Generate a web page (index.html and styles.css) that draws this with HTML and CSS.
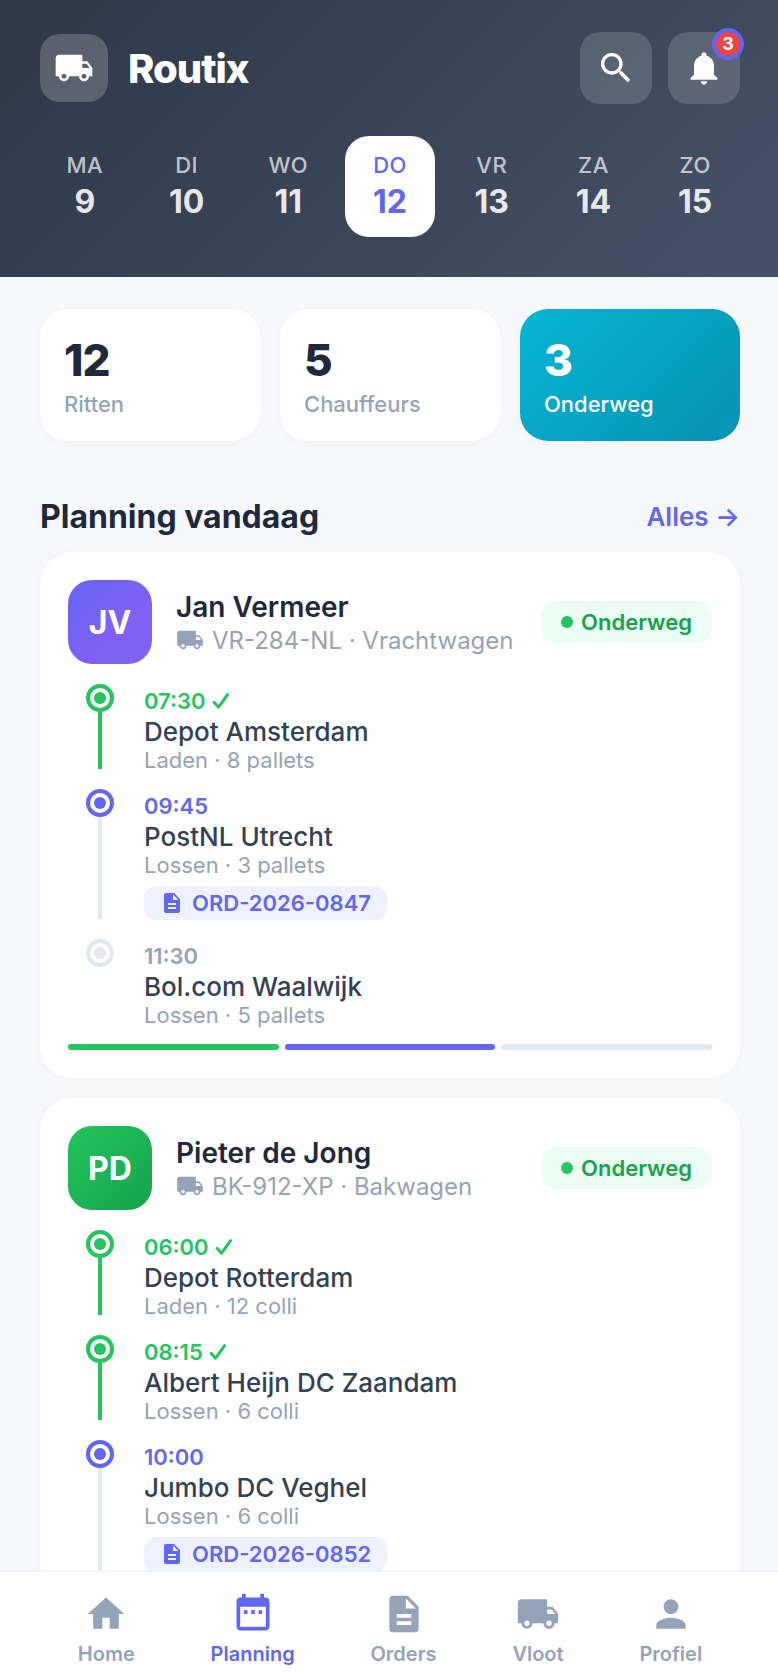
FILE: index.html
```html
<!DOCTYPE html>
<html lang="nl">
<head>
  <meta charset="UTF-8">
  <meta name="viewport" content="width=device-width, initial-scale=1.0">
  <title>Routix</title>
  <link rel="stylesheet" href="styles.css">
</head>
<body>
  <!-- Iconen -->
  <svg class="sprite" width="0" height="0">
    <symbol id="i-truck" viewBox="0 0 24 24"><path d="M20 8h-3V4H3c-1.1 0-2 .9-2 2v11h2c0 1.66 1.34 3 3 3s3-1.34 3-3h6c0 1.66 1.34 3 3 3s3-1.34 3-3h2v-5l-3-4zM6 18.5c-.83 0-1.5-.67-1.5-1.5s.67-1.5 1.5-1.5 1.5.67 1.5 1.5-.67 1.5-1.5 1.5zm13.5-9l1.96 2.5H17V9.5h2.5zm-1.5 9c-.83 0-1.5-.67-1.5-1.5s.67-1.5 1.5-1.5 1.5.67 1.5 1.5-.67 1.5-1.5 1.5z"/></symbol>
    <symbol id="i-search" viewBox="0 0 24 24"><path d="M15.5 14h-.79l-.28-.27C15.41 12.59 16 11.11 16 9.5 16 5.91 13.09 3 9.5 3S3 5.91 3 9.5 5.91 16 9.5 16c1.61 0 3.09-.59 4.23-1.57l.27.28v.79l5 4.99L20.49 19l-4.99-5zm-6 0C7.01 14 5 11.99 5 9.5S7.01 5 9.5 5 14 7.01 14 9.5 11.99 14 9.5 14z"/></symbol>
    <symbol id="i-bell" viewBox="0 0 24 24"><path d="M12 22c1.1 0 2-.9 2-2h-4c0 1.1.89 2 2 2zm6-6v-5c0-3.07-1.64-5.64-4.5-6.32V4c0-.83-.67-1.5-1.5-1.5s-1.5.67-1.5 1.5v.68C7.63 5.36 6 7.92 6 11v5l-2 2v1h16v-1l-2-2z"/></symbol>
    <symbol id="i-doc" viewBox="0 0 24 24"><path d="M14 2H6c-1.1 0-1.99.9-1.99 2L4 20c0 1.1.89 2 1.99 2H18c1.1 0 2-.9 2-2V8l-6-6zm2 16H8v-2h8v2zm0-4H8v-2h8v2zm-3-5V3.5L18.5 9H13z"/></symbol>
    <symbol id="i-home" viewBox="0 0 24 24"><path d="M10 20v-6h4v6h5v-8h3L12 3 2 12h3v8z"/></symbol>
    <symbol id="i-calendar" viewBox="0 0 24 24"><path d="M19 3h-1V1h-2v2H8V1H6v2H5c-1.11 0-2 .9-2 2v14c0 1.1.89 2 2 2h14c1.1 0 2-.9 2-2V5c0-1.1-.9-2-2-2zm0 16H5V8h14v11zM9 10H7v2h2v-2zm4 0h-2v2h2v-2zm4 0h-2v2h2v-2z"/></symbol>
    <symbol id="i-person" viewBox="0 0 24 24"><path d="M12 12c2.21 0 4-1.79 4-4s-1.79-4-4-4-4 1.79-4 4 1.79 4 4 4zm0 2c-2.67 0-8 1.34-8 4v2h16v-2c0-2.66-5.33-4-8-4z"/></symbol>
    <symbol id="i-check" viewBox="0 0 18 18"><path d="M2.2 10.4L6.6 15.2L15.6 2.6" fill="none" stroke="currentColor" stroke-width="3" stroke-linecap="round" stroke-linejoin="round"/></symbol>
  </svg>

  <div class="app">
    <header class="header">
      <div class="topbar">
        <div class="logo"><svg class="icon"><use href="#i-truck"/></svg></div>
        <h1>Routix</h1>
        <button class="icon-btn" aria-label="Zoeken"><svg class="icon"><use href="#i-search"/></svg></button>
        <button class="icon-btn" aria-label="Meldingen"><svg class="icon"><use href="#i-bell"/></svg><span class="badge">3</span></button>
      </div>
      <div class="week">
        <div class="day"><span class="day-name">MA</span><span class="day-num">9</span></div>
        <div class="day"><span class="day-name">DI</span><span class="day-num">10</span></div>
        <div class="day"><span class="day-name">WO</span><span class="day-num">11</span></div>
        <div class="day active"><span class="day-name">DO</span><span class="day-num">12</span></div>
        <div class="day"><span class="day-name">VR</span><span class="day-num">13</span></div>
        <div class="day"><span class="day-name">ZA</span><span class="day-num">14</span></div>
        <div class="day"><span class="day-name">ZO</span><span class="day-num">15</span></div>
      </div>
    </header>

    <main class="content">
      <!-- Statistieken -->
      <div class="stats">
        <div class="stat"><div class="stat-value">12</div><div class="stat-label">Ritten</div></div>
        <div class="stat"><div class="stat-value">5</div><div class="stat-label">Chauffeurs</div></div>
        <div class="stat highlight"><div class="stat-value">3</div><div class="stat-label">Onderweg</div></div>
      </div>

      <div class="section-head">
        <h2>Planning vandaag</h2>
        <a class="more">Alles →</a>
      </div>

      <!-- Rit 1 -->
      <section class="card">
        <div class="driver">
          <div class="avatar purple">JV</div>
          <div class="driver-info">
            <div class="driver-name">Jan Vermeer</div>
            <div class="vehicle"><svg class="icon"><use href="#i-truck"/></svg>VR-284-NL · Vrachtwagen</div>
          </div>
          <div class="status">Onderweg</div>
        </div>
        <div class="stop done">
          <div class="track"><div class="dot"></div><div class="line"></div></div>
          <div class="stop-body">
            <div class="time">07:30<svg class="icon"><use href="#i-check"/></svg></div>
            <div class="place">Depot Amsterdam</div>
            <div class="detail">Laden · 8 pallets</div>
          </div>
        </div>
        <div class="stop current">
          <div class="track"><div class="dot"></div><div class="line"></div></div>
          <div class="stop-body">
            <div class="time">09:45</div>
            <div class="place">PostNL Utrecht</div>
            <div class="detail">Lossen · 3 pallets</div>
            <div class="order"><svg class="icon"><use href="#i-doc"/></svg>ORD-2026-0847</div>
          </div>
        </div>
        <div class="stop">
          <div class="track"><div class="dot"></div></div>
          <div class="stop-body">
            <div class="time">11:30</div>
            <div class="place">Bol.com Waalwijk</div>
            <div class="detail">Lossen · 5 pallets</div>
          </div>
        </div>
        <div class="progress">
          <span class="bar done"></span>
          <span class="bar current"></span>
          <span class="bar"></span>
        </div>
      </section>

      <!-- Rit 2 -->
      <section class="card">
        <div class="driver">
          <div class="avatar green">PD</div>
          <div class="driver-info">
            <div class="driver-name">Pieter de Jong</div>
            <div class="vehicle"><svg class="icon"><use href="#i-truck"/></svg>BK-912-XP · Bakwagen</div>
          </div>
          <div class="status">Onderweg</div>
        </div>
        <div class="stop done">
          <div class="track"><div class="dot"></div><div class="line"></div></div>
          <div class="stop-body">
            <div class="time">06:00<svg class="icon"><use href="#i-check"/></svg></div>
            <div class="place">Depot Rotterdam</div>
            <div class="detail">Laden · 12 colli</div>
          </div>
        </div>
        <div class="stop done">
          <div class="track"><div class="dot"></div><div class="line"></div></div>
          <div class="stop-body">
            <div class="time">08:15<svg class="icon"><use href="#i-check"/></svg></div>
            <div class="place">Albert Heijn DC Zaandam</div>
            <div class="detail">Lossen · 6 colli</div>
          </div>
        </div>
        <div class="stop current">
          <div class="track"><div class="dot"></div><div class="line"></div></div>
          <div class="stop-body">
            <div class="time">10:00</div>
            <div class="place">Jumbo DC Veghel</div>
            <div class="detail">Lossen · 6 colli</div>
            <div class="order"><svg class="icon"><use href="#i-doc"/></svg>ORD-2026-0852</div>
          </div>
        </div>
      </section>
    </main>

    <nav class="nav">
      <a class="nav-item"><svg class="icon"><use href="#i-home"/></svg>Home</a>
      <a class="nav-item active"><svg class="icon"><use href="#i-calendar"/></svg>Planning</a>
      <a class="nav-item"><svg class="icon"><use href="#i-doc"/></svg>Orders</a>
      <a class="nav-item"><svg class="icon"><use href="#i-truck"/></svg>Vloot</a>
      <a class="nav-item"><svg class="icon"><use href="#i-person"/></svg>Profiel</a>
    </nav>
  </div>
</body>
</html>
```

FILE: styles.css
```css
* {
  box-sizing: border-box;
  margin: 0;
  padding: 0;
}
body {
  font-family: 'Inter', sans-serif;
  background: #f7f8fc;
  color: #1e293b;
}
.sprite {
  display: none;
}
.icon {
  display: block;
  flex-shrink: 0;
  width: 40px;
  height: 40px;
  fill: currentColor;
}
.app {
  display: flex;
  flex-direction: column;
  height: 100vh;
  overflow: hidden;
}

/* Header */
.header {
  flex-shrink: 0;
  height: 277px;
  padding: 32px 38px 40px 40px;
  background: linear-gradient(135deg, #2e3748, #475268);
  color: #fff;
}
.topbar {
  display: flex;
  align-items: center;
  gap: 16px;
  margin-bottom: 32px;
}
.logo {
  display: flex;
  align-items: center;
  justify-content: center;
  width: 68px;
  height: 68px;
  border-radius: 20px;
  background: rgba(255, 255, 255, 0.2);
}
h1 {
  flex: 1;
  margin-left: 4px;
  font-size: 40px;
  font-weight: 800;
  letter-spacing: -1px;
}
.icon-btn {
  position: relative;
  display: flex;
  align-items: center;
  justify-content: center;
  width: 72px;
  height: 72px;
  border: none;
  border-radius: 20px;
  background: rgba(255, 255, 255, 0.15);
  color: #fff;
  font-family: inherit;
}
.badge {
  position: absolute;
  top: -4px;
  right: -4px;
  width: 32px;
  height: 32px;
  border: 4px solid #6366f1;
  border-radius: 50%;
  background: #ef4444;
  font-size: 18px;
  font-weight: 700;
  line-height: 24px;
  text-align: center;
}
.week {
  display: flex;
  gap: 12px;
}
.day {
  flex: 1;
  display: flex;
  flex-direction: column;
  align-items: center;
  gap: 4px;
  height: 101px;
  padding: 16px 0;
  border-radius: 24px;
}
.day-name {
  font-size: 22px;
  font-weight: 500;
  line-height: 27px;
  letter-spacing: 0.5px;
  color: rgba(255, 255, 255, 0.7);
}
.day-num {
  font-size: 32px;
  font-weight: 700;
  line-height: 38px;
  color: rgba(255, 255, 255, 0.9);
}
.day.active {
  background: #fff;
}
.day.active span {
  color: #6366f1;
}

/* Content */
.content {
  flex: 1;
  min-height: 0;
  overflow: hidden;
  padding: 32px 38px 0 40px;
}
.stats {
  display: flex;
  gap: 20px;
}
.stat {
  flex: 1;
  height: 132px;
  padding: 25px 24px 23px;
  border-radius: 28px;
  background: #fff;
  box-shadow: 0 2px 8px rgba(0, 0, 0, 0.03);
}
.stat-value {
  margin-bottom: 4px;
  font-size: 44px;
  font-weight: 800;
  line-height: 53px;
  letter-spacing: -1px;
}
.stat-label {
  font-size: 22px;
  font-weight: 500;
  line-height: 27px;
  color: #94a3b8;
}
.stat.highlight {
  background: linear-gradient(135deg, #06b6d4, #0891b2);
}
.stat.highlight div {
  color: #fff;
}
.section-head {
  display: flex;
  align-items: center;
  justify-content: space-between;
  height: 39px;
  margin: 56px 0 16px;
}
h2 {
  font-size: 32px;
  font-weight: 700;
}
.more {
  font-size: 26px;
  font-weight: 600;
  color: #6366f1;
}

/* Ritkaart */
.card {
  margin-bottom: 20px;
  padding: 28px;
  border-radius: 32px;
  background: #fff;
  box-shadow: 0 2px 12px rgba(0, 0, 0, 0.03);
}
.driver {
  display: flex;
  align-items: center;
  gap: 24px;
  margin-bottom: 20px;
}
.avatar {
  display: flex;
  align-items: center;
  justify-content: center;
  width: 84px;
  height: 84px;
  border-radius: 24px;
  color: #fff;
  font-size: 32px;
  font-weight: 700;
}
.purple {
  background: linear-gradient(135deg, #6366f1, #8060f5 60%);
}
.green {
  background: linear-gradient(135deg, #22c55e, #16a34a);
}
.driver-info {
  flex: 1;
}
.driver-name {
  font-size: 28px;
  font-weight: 600;
  line-height: 34px;
}
.vehicle {
  display: flex;
  align-items: center;
  gap: 8px;
  margin-top: 2px;
  font-size: 24px;
  line-height: 29px;
  color: #94a3b8;
  white-space: nowrap;
}
.vehicle .icon {
  width: 28px;
  height: 28px;
}
.status {
  display: flex;
  align-items: center;
  gap: 8px;
  height: 42px;
  padding: 0 20px;
  border-radius: 16px;
  background: #ecfdf5;
  color: #16a34a;
  font-size: 22px;
  font-weight: 600;
}
.status::before {
  content: "";
  width: 12px;
  height: 12px;
  border-radius: 50%;
  background: #22c55e;
}

/* Stops */
.stop {
  display: flex;
  gap: 12px;
  margin-bottom: 16px;
  color: #e2e8f0;
}
.stop.done {
  color: #22c55e;
}
.stop.current {
  color: #6366f1;
}
.track {
  display: flex;
  flex-direction: column;
  align-items: center;
  width: 64px;
}
.dot {
  display: flex;
  align-items: center;
  justify-content: center;
  width: 28px;
  height: 28px;
  border: 4px solid currentColor;
  border-radius: 50%;
}
.dot::after {
  content: "";
  width: 12px;
  height: 12px;
  border-radius: 50%;
  background: currentColor;
}
.line {
  flex: 1;
  width: 4px;
  margin-bottom: 4px;
  background: #e2e8f0;
}
.done .line {
  background: #22c55e;
}
.stop-body {
  padding-top: 3px;
}
.time {
  display: flex;
  align-items: center;
  gap: 6px;
  font-size: 22px;
  font-weight: 600;
  line-height: 28px;
  color: #94a3b8;
}
.time .icon {
  width: 18px;
  height: 18px;
}
.done .time {
  color: #22c55e;
}
.current .time {
  color: #6366f1;
}
.place {
  padding-top: 1px;
  font-size: 26px;
  font-weight: 500;
  line-height: 32px;
  color: #334155;
}
.detail {
  font-size: 22px;
  line-height: 25px;
  color: #94a3b8;
}
.order {
  display: inline-flex;
  align-items: center;
  gap: 8px;
  height: 34px;
  margin: 8px 0 3px;
  padding: 0 16px;
  border-radius: 12px;
  background: #eef2ff;
  color: #6366f1;
  font-size: 22px;
  font-weight: 600;
  vertical-align: top;
}
.order .icon {
  width: 24px;
  height: 24px;
}
.progress {
  display: flex;
  gap: 6px;
}
.bar {
  flex: 1;
  height: 6px;
  border-radius: 3px;
  background: #e2e8f0;
}
.bar.done {
  background: #22c55e;
}
.bar.current {
  background: #6366f1;
}

/* Navigatie */
.nav {
  display: flex;
  justify-content: space-evenly;
  flex-shrink: 0;
  height: 108px;
  padding: 20px 0 0 2px;
  border-top: 2px solid #f1f5f9;
  background: #fff;
}
.nav-item {
  display: flex;
  flex-direction: column;
  align-items: center;
  gap: 5px;
  font-size: 20px;
  font-weight: 600;
  line-height: 26px;
  color: #94a3b8;
}
.nav-item .icon {
  width: 44px;
  height: 44px;
}
.nav-item.active {
  color: #6366f1;
}
```
